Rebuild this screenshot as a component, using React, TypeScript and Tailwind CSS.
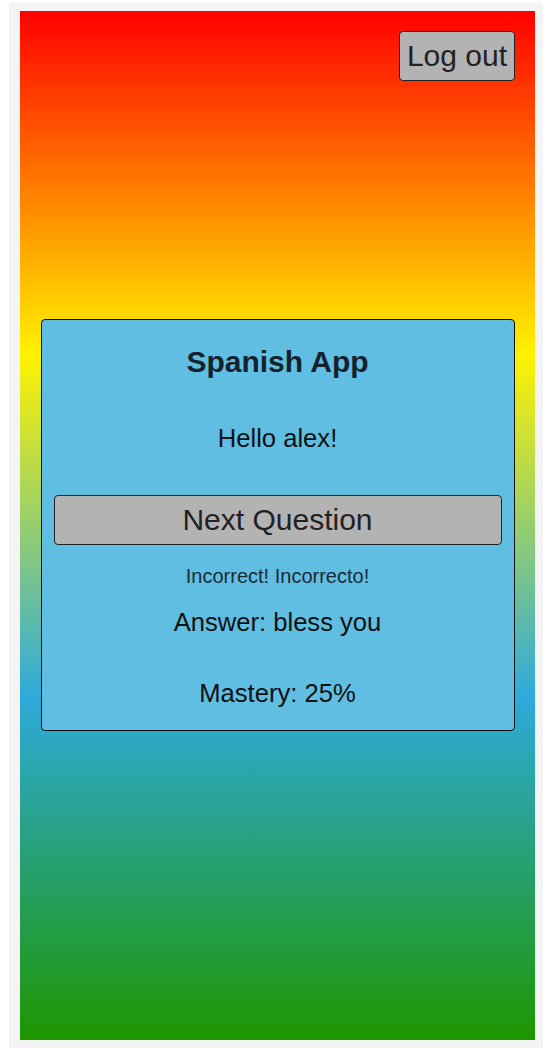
export default function App() {
  return (
    <div className="min-h-[1050px] bg-white pl-[9px] pt-[3px] font-['Liberation_Sans',Arial,sans-serif]">
      <div className="h-[1045px] w-[534px] bg-[#f4f4f4] pl-[11px] pt-[8px]">
        <div className="flex h-[1029px] w-[515px] flex-col bg-[linear-gradient(#ff0000,#fff200,#2eaadc,#1e9600)]">
          <div className="flex justify-end pr-[20px] pt-[20px]">
            <button className="h-[50px] rounded-[4px] border border-[#222] bg-[#b3b3b3] px-[7px] text-[30px] leading-[34px] text-[#222]">
              Log out
            </button>
          </div>

          <section className="mx-auto mt-[238px] flex w-[474px] flex-col items-center rounded-[4px] border border-[#111] bg-[#60bee2] px-3 pt-[24px] pb-[22px] text-[#111]">
            <h1 className="text-[30px] font-bold leading-[36px] text-[#14222b]">Spanish App</h1>
            <p className="mt-[43px] text-[25.6px] leading-[30px]">Hello alex!</p>
            <button className="mt-[42px] h-[50px] w-full rounded-[4px] border border-[#222] bg-[#b3b3b3] text-[30px] leading-[34px] text-[#222]">
              Next Question
            </button>
            <p className="mt-[19px] text-[20px] leading-[24px] text-[#1a2a33]">Incorrect! Incorrecto!</p>
            <p className="mt-[19px] text-[25.6px] leading-[30px]">Answer: bless you</p>
            <p className="mt-[41px] text-[25.6px] leading-[30px]">Mastery: 25%</p>
          </section>
        </div>
      </div>
    </div>
  );
}
